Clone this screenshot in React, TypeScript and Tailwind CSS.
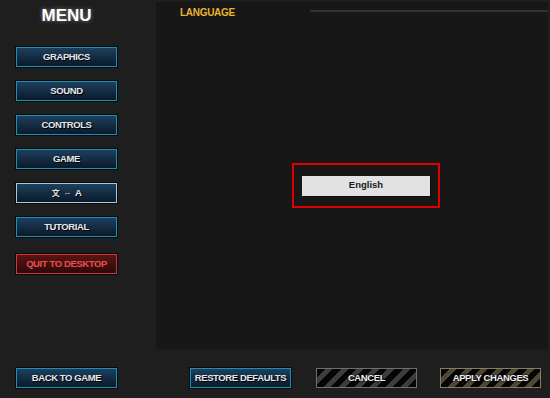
import type { ReactNode } from "react";

const menuItems = ["GRAPHICS", "SOUND", "CONTROLS", "GAME", "LANGUAGE", "TUTORIAL"];

const font = "font-['Liberation_Sans',Arial,sans-serif]";

function BlueButton({ children, active = false, className = "" }: { children: ReactNode; active?: boolean; className?: string }) {
  return (
    <div
      className={`flex h-[20px] w-[101px] items-center justify-center border bg-gradient-to-b from-[#1d405e] to-[#0b1a2a] text-[9.5px] font-bold tracking-[-0.4px] text-[#e4e8ec] shadow-[0_0_0_1px_#0a0a0a] [text-shadow:1px_1px_0_#000] ${
        active ? "border-[#a9c9d3]" : "border-[#1b8fb5]"
      } ${className}`}
    >
      {children}
    </div>
  );
}

function StripeButton({ label, tone }: { label: string; tone: "gray" | "olive" }) {
  const stripes =
    tone === "gray"
      ? "border-[#6f6f6f] bg-[repeating-linear-gradient(135deg,#050505_0px,#050505_6px,#3d3d3d_6px,#3d3d3d_11px)]"
      : "border-[#857d62] bg-[repeating-linear-gradient(135deg,#050505_0px,#050505_6px,#4d4736_6px,#4d4736_11px)]";
  return (
    <div className={`flex h-[20px] w-[101px] items-center justify-center border text-[9.5px] font-bold tracking-[-0.4px] text-[#eeeeee] ${stripes}`}>
      <span className="[text-shadow:0_0_2px_#000,0_0_2px_#000]">{label}</span>
    </div>
  );
}

export default function App() {
  return (
    <div className={`flex h-[398px] w-[550px] flex-col overflow-hidden bg-[#1e1e1e] ${font}`}>
      <div className="flex h-[349px]">
        <aside className="flex w-[156px] flex-col">
          <div className="ml-[16px] flex w-[101px] flex-col items-center">
            <h1 className="pt-[7px] text-[17px] font-bold leading-none text-white [text-shadow:0_0_4px_rgba(255,255,255,0.45)]">MENU</h1>
            <div className="mt-[23px] flex flex-col gap-[14px]">
              {menuItems.map((item) =>
                item === "LANGUAGE" ? (
                  <BlueButton key={item} active>
                    <span className="font-['Noto_Sans_CJK_SC',sans-serif] text-[8px]">文</span>
                    <span className="mx-[4px] text-[8px]">↔</span>
                    <span>A</span>
                  </BlueButton>
                ) : (
                  <BlueButton key={item}>{item}</BlueButton>
                )
              )}
              <div className="mt-[3px] flex h-[20px] w-[101px] items-center justify-center border border-[#c83a3a] bg-gradient-to-b from-[#5a1414] to-[#2e0909] text-[9.5px] font-bold tracking-[-0.4px] text-[#e8504e] shadow-[0_0_0_1px_#0a0a0a]">
                QUIT TO DESKTOP
              </div>
            </div>
          </div>
        </aside>

        <main className="mr-[2px] mt-[2px] flex flex-1 flex-col bg-[#171717]">
          <div className="flex h-[20px] items-center">
            <span className="ml-[24px] text-[10px] font-bold tracking-[-0.3px] text-[#e8b232]">LANGUAGE</span>
            <div className="ml-auto mt-[-3px] h-[2px] w-[238px] bg-[#323232]" />
          </div>
          <div className="flex flex-1 items-center justify-center pl-[28px]">
            <div className="flex h-[45px] w-[148px] items-center justify-center border-2 border-[#e00000]">
              <div className="flex h-[20px] w-[128px] items-center justify-center bg-[#e2e2e2] text-[9.5px] font-bold text-[#1a1a1a] shadow-[1px_1px_0_#0a0a0a]">
                English
              </div>
            </div>
          </div>
        </main>
      </div>

      <footer className="flex flex-1 items-start pl-[16px] pt-[19px]">
        <BlueButton>BACK TO GAME</BlueButton>
        <BlueButton className="ml-[73px]">RESTORE DEFAULTS</BlueButton>
        <div className="ml-[25px]">
          <StripeButton label="CANCEL" tone="gray" />
        </div>
        <div className="ml-[23px]">
          <StripeButton label="APPLY CHANGES" tone="olive" />
        </div>
      </footer>
    </div>
  );
}
